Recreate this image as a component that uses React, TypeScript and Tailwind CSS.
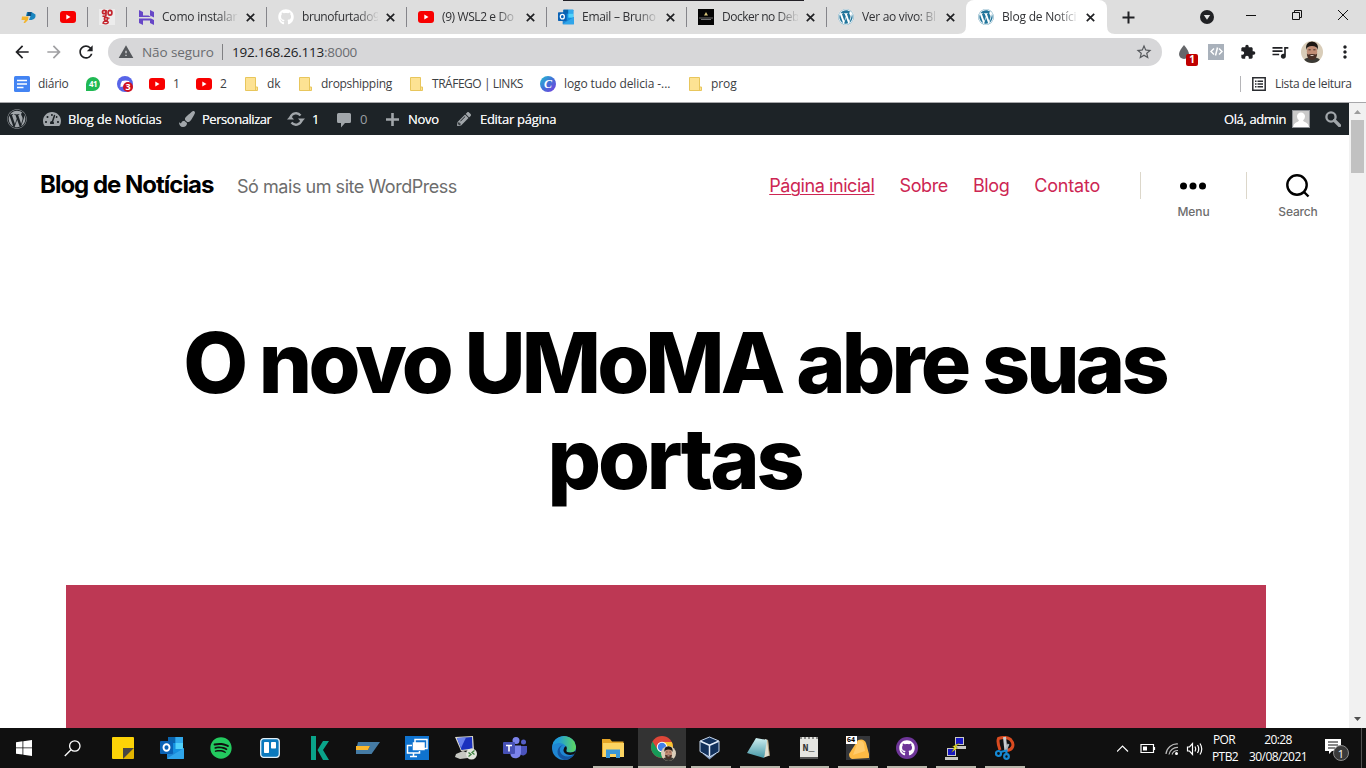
import type { ReactNode } from "react";
import { FaWordpress, FaGithub, FaSpotify, FaPaintBrush, FaPencilAlt, FaTachometerAlt } from "react-icons/fa";
import { MdWarning, MdArrowBack, MdArrowForward, MdRefresh, MdStarBorder, MdExtension, MdQueueMusic, MdMoreVert } from "react-icons/md";

const UI = "font-['Open_Sans','Noto_Sans',sans-serif]";

function YouTube() {
  return (
    <svg width="16" height="12" viewBox="0 0 16 12" className="block shrink-0">
      <rect width="16" height="12" rx="3" fill="#f80000" />
      <path d="M6.300 3.500v5L10.500 6z" fill="#fff" />
    </svg>
  );
}

function WpBlue() {
  return (
    <span className="block size-4 rounded-full bg-white">
      <FaWordpress className="block size-4 text-[#21759b]" />
    </span>
  );
}

function Outlook({ size }: { size: number }) {
  return (
    <svg width={size} height={size} viewBox="0 0 24 24" className="block shrink-0">
      <rect x="8" y="1" width="15" height="19" rx="1" fill="#1490df" />
      <rect x="8" y="1" width="7.500" height="6" fill="#0a64ad" />
      <rect x="15.500" y="1" width="7.500" height="6" fill="#32a9ec" />
      <rect x="15.500" y="7" width="7.500" height="6" fill="#51d2fb" />
      <path d="M7 12l8.500 5L24 12v10a1 1 0 0 1-1 1H8a1 1 0 0 1-1-1z" fill="#1d85d4" />
      <path d="M7 22.500L24 12v10a1 1 0 0 1-1 1H8z" fill="#2fa5ea" />
      <rect x="0" y="5" width="13" height="13" rx="1" fill="#0a62b5" />
      <ellipse cx="6.500" cy="11.500" rx="3" ry="3.300" fill="none" stroke="#fff" strokeWidth="1.900" />
    </svg>
  );
}

function Folder() {
  return (
    <svg width="13" height="14" viewBox="0 0 13 14" className="block shrink-0">
      <path d="M.5.5h10v9.500h2v3.500H.5z" fill="#fde293" stroke="#e8c65c" />
      <path d="M10.500 9v4.500" stroke="#e8c65c" />
    </svg>
  );
}

function Face({ size }: { size: number }) {
  return (
    <svg width={size} height={size} viewBox="0 0 22 22" className="block shrink-0">
      <defs>
        <clipPath id={"face" + size}>
          <circle cx="11" cy="11" r="11" />
        </clipPath>
      </defs>
      <g clipPath={"url(#face" + size + ")"}>
        <rect width="22" height="22" fill="#d9cdb9" />
        <path d="M1 22q2-6 10-6t10 6z" fill="#3b3a35" />
        <ellipse cx="11" cy="10.500" rx="5.200" ry="7.500" fill="#c08c74" />
        <path d="M5 9q-1-8 6-8.500 7 .5 6 8.500-1-4-6-4t-6 4z" fill="#1d1713" />
        <path d="M5.800 12.500q1.200 1.500 2.500.8 2.700-.8 5.400 0 1.300.5 2.500-.8-.2 6-5.200 6.500-5-.5-5.200-6.500z" fill="#4a3026" />
        <path d="M8.800 14.200q2.200-.4 4.400 0-2.200 1.600-4.400 0z" fill="#f3e6df" />
        <path d="M7.500 8.800h2.200M12.300 8.800h2.200" stroke="#2a1a14" strokeWidth=".8" />
      </g>
    </svg>
  );
}

const Close = () => (
  <svg width="9" height="9" viewBox="0 0 9 9" className="block shrink-0">
    <path d="M.8.8l7.400 7.400M8.200.8L.8 8.200" stroke="#202124" strokeWidth="1.700" />
  </svg>
);

function Tab({ icon, title, active, track }: { icon: ReactNode; title: string; active?: boolean; track: string }) {
  return (
    <div className={"relative flex h-[34px] shrink-0 items-center " + (active ? "w-[141px] rounded-t-lg bg-white pl-3" : "w-[140px] pl-3")}>
      {active && (
        <svg width="157" height="8" viewBox="0 0 157 8" className="absolute bottom-0 left-[-8px]">
          <path d="M0 8q8 0 8-8v8zM157 8q-8 0-8-8v8z" fill="#fff" />
        </svg>
      )}
      <span className="flex w-4 justify-center">{icon}</span>
      <span className={"ml-2 w-[76px] text-[12px] leading-[18px] whitespace-nowrap text-[#303134] [mask-image:linear-gradient(to_right,black_72%,rgba(0,0,0,0.1)_98%)] " + track}>{title}</span>
      <span className="ml-2">
        <Close />
      </span>
    </div>
  );
}

const Sep = () => <div className="h-5 w-px shrink-0 bg-[#85858a]" />;

function TabStrip() {
  return (
    <div className="relative flex h-[34px] items-center bg-[#dedede]">
      <div className="flex w-[47px] justify-center pl-[9px]">
        <svg width="15" height="13" viewBox="0 0 15 13">
          <path d="M6 1h4.500l4 2.500q.5 4.500-4 5.500H8L9.500 5H5z" fill="#1a86c0" />
          <path d="M7 1h3.500l-.5 4H6z" fill="#0d4f80" />
          <path d="M1 5.500h6.500L7 9l-3 3H2.500L4 9H.5z" fill="#f3b52d" />
        </svg>
      </div>
      <Sep />
      <div className="flex w-[39px] justify-center">
        <YouTube />
      </div>
      <Sep />
      <div className="flex w-[38px] justify-center">
        <svg width="16" height="16" viewBox="0 0 16 16" fill="none" stroke="#c4252d" strokeWidth="1.700">
          <rect width="16" height="16" fill="#ececec" stroke="none" />
          <circle cx="5.200" cy="3" r="1.700" />
          <path d="M7 1q-.2 3 0 5-.5 2-3.500 1" />
          <ellipse cx="11" cy="3.700" rx="1.900" ry="2.400" />
          <circle cx="7" cy="10" r="1.600" />
          <path d="M9 8.500q0 1 1.500.5M6 12q4 .3 3 2-2 1.700-5 .2 0-1.500 2-2.200" strokeWidth="1.400" />
        </svg>
      </div>
      <Sep />
      <div className="-mr-px -ml-px flex">
        <Tab
          track="tracking-[-0.2px]"
          title="Como instalar"
          icon={
            <svg width="15" height="15" viewBox="0 0 15 15">
              <path d="M0 0l4 2v3.500h5.500L12 7H0zM11 0l4 2v5.500l-4-2zM0 8.500h12L15 10v5l-4-2v-2.500H4V15l-4-2z" fill="#6747c7" />
            </svg>
          }
        />
        <span className="w-px" />
      </div>
      <Sep />
      <div className="-mr-px -ml-px flex">
        <Tab track="tracking-[-0.42px]" title="brunofurtado9" icon={<FaGithub className="size-4 text-white" />} />
        <span className="w-px" />
      </div>
      <Sep />
      <div className="-mr-px -ml-px flex">
        <Tab track="tracking-[-0.4px]" title="(9) WSL2 e Do" icon={<YouTube />} />
        <span className="w-px" />
      </div>
      <Sep />
      <div className="-mr-px -ml-px flex">
        <Tab track="tracking-[-0.28px]" title="Email – Bruno" icon={<Outlook size={16} />} />
        <span className="w-px" />
      </div>
      <Sep />
      <div className="-mr-px -ml-px flex">
        <Tab
          track="tracking-[-0.5px]"
          title="Docker no Deb"
          icon={
            <svg width="16" height="16" viewBox="0 0 16 16">
              <rect width="16" height="16" fill="#050505" />
              <path d="M8 3l2 3.500H6z" fill="#d9c57a" />
              <path d="M1 9h14M3 10.500h10" stroke="#8c8c8c" strokeWidth=".8" />
            </svg>
          }
        />
        <span className="w-px" />
      </div>
      <Sep />
      <div className="-mr-px -ml-px flex">
        <Tab track="tracking-[-0.3px]" title="Ver ao vivo: Bl" icon={<WpBlue />} />
        <span className="w-px" />
      </div>
      <Tab active track="tracking-[-0.2px]" title="Blog de Notíci" icon={<WpBlue />} />
      <svg width="13" height="13" viewBox="0 0 13 13" className="ml-[15px] shrink-0">
        <path d="M6.500.5v12M.5 6.500h12" stroke="#202124" strokeWidth="2" />
      </svg>
      <svg width="14" height="14" viewBox="0 0 14 14" className="ml-[65px] shrink-0">
        <circle cx="7" cy="7" r="7" fill="#202124" />
        <path d="M3.800 5h6.400L7 9.800z" fill="#e4e4e4" />
      </svg>
      <svg width="102" height="12" viewBox="0 0 102 12" className="mb-[5px] ml-[32px] shrink-0" fill="none" stroke="#111" strokeWidth="1">
        <path d="M0 6.500h10M46.500 3.500h7v7h-7zM48.500 3.500v-2h7v7h-2M92 1l10 10M102 1L92 11" />
      </svg>
      <span className="absolute top-0 left-[563px] h-px w-[241px] bg-[#222026]" />
    </div>
  );
}

function Toolbar() {
  return (
    <div className="flex h-[35px] items-center bg-white pl-[12px] text-[#202124]">
      <MdArrowBack className="size-5 shrink-0" />
      <MdArrowForward className="ml-3 size-5 shrink-0 text-[#a0a0a3]" />
      <MdRefresh className="ml-[12px] size-5 shrink-0" />
      <div className="ml-[12px] flex h-7 w-[1054px] shrink-0 items-center rounded-full bg-[#d7d7d9] pr-[9px] pl-[10px]">
        <MdWarning className="size-4 shrink-0 text-[#55585c]" />
        <span className="ml-2 w-[80px] pt-px text-[13.500px] tracking-[-0.08px] whitespace-nowrap text-[#6a6c70]">Não seguro</span>
        <span className="h-4 w-px bg-[#808083]" />
        <span className="ml-[9px] pt-px text-[13.500px] tracking-[-0.26px] whitespace-nowrap text-[#202124]">
          192.168.26.113<span className="text-[#6a6c70]">:8000</span>
        </span>
        <MdStarBorder className="ml-auto size-[18px] text-[#55585c]" />
      </div>
      <div className="relative ml-[16px] size-5 shrink-0">
        <svg width="12" height="14" viewBox="0 0 12 14" className="mt-[3px]">
          <path d="M6 0q5 6 5 9a5 5 0 0 1-10 0q0-3 5-9z" fill="#65676a" />
        </svg>
        <span className="absolute top-[12px] left-[8px] flex size-3 items-center justify-center rounded-[2px] bg-[#c00000] text-[10px] font-bold text-white">1</span>
      </div>
      <div className="ml-[10px] flex size-4 shrink-0 items-center justify-center bg-[#a9b1bb]">
        <svg width="13" height="9" viewBox="0 0 13 9" fill="none" stroke="#fff" strokeWidth="1.500">
          <path d="M4 1.500L1 4.500l3 3M9 1.500l3 3-3 3M7.500.5l-2 8" />
        </svg>
      </div>
      <MdExtension className="ml-[16px] size-4 shrink-0" />
      <MdQueueMusic className="ml-[14px] size-5 shrink-0" />
      <span className="ml-[11px]">
        <Face size={22} />
      </span>
      <MdMoreVert className="ml-[12px] size-5 shrink-0" />
    </div>
  );
}

function Mark({ icon, text, w, track }: { icon: ReactNode; text?: string; w: string; track?: string }) {
  return (
    <div className={"flex shrink-0 items-center " + w}>
      <span className="flex w-4 shrink-0 justify-center">{icon}</span>
      {text && <span className={"ml-2 whitespace-nowrap " + (track ?? "")}>{text}</span>}
    </div>
  );
}

function Bookmarks() {
  return (
    <div className="flex h-[34px] items-center border-b border-[#a7a7aa] bg-white pb-[3px] pl-[14px] text-[12px] text-[#3c4043]">
      <Mark
        w="w-[71px]"
        text="diário"
        track="tracking-[-0.3px]"
        icon={
          <svg width="16" height="16" viewBox="0 0 16 16">
            <rect width="16" height="16" rx="1.500" fill="#4384f3" />
            <path d="M3 4.500h10M3 8h10M3 11.500h6.500" stroke="#fff" strokeWidth="1.600" />
          </svg>
        }
      />
      <Mark
        w="w-[32px]"
        icon={
          <span className="flex size-[14px] items-center justify-center rounded-full rounded-bl-[4px] bg-[#20b954] text-[8px] font-bold tracking-[-0.5px] text-white">41</span>
        }
      />
      <Mark
        w="w-[32px]"
        icon={
          <span className="relative flex size-4 items-center justify-center rounded-full bg-[#5865e8]">
            <svg width="11" height="8" viewBox="0 0 11 8">
              <path d="M2 1q3.500-1 7 0 2 3 1.500 6L8 6.500H3L.5 7Q0 4 2 1z" fill="#fff" />
            </svg>
            <span className="absolute top-[6px] left-[6px] flex size-[10px] items-center justify-center rounded-full bg-[#cf1020] text-[9px] font-bold text-white">3</span>
          </span>
        }
      />
      <Mark w="w-[47px]" icon={<YouTube />} text="1" />
      <Mark w="w-[47px]" icon={<YouTube />} text="2" />
      <Mark w="w-[54px]" icon={<Folder />} text="dk" />
      <Mark w="w-[111px]" icon={<Folder />} text="dropshipping" track="tracking-[-0.3px]" />
      <Mark w="w-[132px]" icon={<Folder />} text="TRÁFEGO | LINKS" track="tracking-[-0.47px]" />
      <Mark
        w="w-[147px]"
        text="logo tudo delicia -..."
        track="tracking-[-0.1px]"
        icon={
          <span className="flex size-4 items-center justify-center rounded-full bg-linear-to-br from-[#12bfd0] via-[#416fd7] to-[#7134df] font-['Liberation_Serif',serif] text-[12px] leading-none font-bold text-white italic">C</span>
        }
      />
      <Mark w="w-[60px]" icon={<Folder />} text="prog" track="tracking-[-0.1px]" />
      <span className="ml-auto h-4 w-px bg-[#b5b5b8]" />
      <svg width="14" height="14" viewBox="0 0 14 14" className="ml-[11px] shrink-0" fill="none" stroke="#2a2c30" strokeWidth="1.500">
        <path d="M.8.8h12.400v12.400H.8zM3 4.200h1.500M5.500 4.200H11M3 7h1.500M5.500 7H11M3 9.800h1.500M5.500 9.800H11" />
      </svg>
      <span className="ml-[9px] w-[91px] tracking-[-0.35px] whitespace-nowrap">Lista de leitura</span>
    </div>
  );
}

function AdminBar() {
  return (
    <div className="flex h-8 shrink-0 items-center bg-[#1d2327] pl-[7px] text-[13px] leading-[18px] whitespace-nowrap text-[#f0f0f1] [text-shadow:0_0_0.3px_#f0f0f1]">
      <FaWordpress className="size-5 shrink-0 text-[#a1a6aa]" />
      <FaTachometerAlt className="ml-4 size-[18px] shrink-0 text-[#a1a6aa]" />
      <span className="ml-[7px] w-[111px] tracking-[-0.22px]">Blog de Notícias</span>
      <FaPaintBrush className="size-4 shrink-0 text-[#a1a6aa]" />
      <span className="ml-[7px] w-[85px] tracking-[-0.45px]">Personalizar</span>
      <svg width="18" height="16" viewBox="0 0 18 16" className="shrink-0" fill="none" stroke="#a1a6aa" strokeWidth="2.300">
        <path d="M3.500 6.500A5.700 5.700 0 0 1 13.500 4.500M14.500 9.500A5.700 5.700 0 0 1 4.500 11.500" />
        <path d="M11 7.500h7L14.500 11.500zM0 8.500h7L3.500 4.500z" fill="#a1a6aa" stroke="none" />
      </svg>
      <span className="ml-[7px] w-[25px]">1</span>
      <svg width="14" height="16" viewBox="0 0 14 16" className="mt-px shrink-0">
        <path d="M1.500 1h11a1.500 1.500 0 0 1 1.500 1.500v7a1.500 1.500 0 0 1-1.500 1.500H8l-4 4.500V11H1.500A1.500 1.500 0 0 1 0 9.500v-7A1.500 1.500 0 0 1 1.500 1z" fill="#a1a6aa" />
      </svg>
      <span className="ml-[9px] w-[26px] text-[#9a9fa3] [text-shadow:none]">0</span>
      <svg width="13" height="13" viewBox="0 0 13 13" className="shrink-0">
        <path d="M6.500 0v13M0 6.500h13" stroke="#a1a6aa" strokeWidth="2.600" />
      </svg>
      <span className="ml-[9px] w-[49px] tracking-[-0.3px]">Novo</span>
      <FaPencilAlt className="size-[14px] shrink-0 text-[#a1a6aa]" />
      <span className="ml-[9px] tracking-[-0.28px]">Editar página</span>
      <span className="ml-auto tracking-[-0.38px]">Olá, admin</span>
      <svg width="18" height="18" viewBox="0 0 18 18" className="ml-[6px] shrink-0">
        <rect width="18" height="18" fill="#c9c9c9" />
        <path d="M9 2.500a4 4 0 0 1 4 4.200 5 5 0 0 1-2 3.600q.2 1.300 3 2.200 2.500 1 3 4.500H1q.5-3.500 3-4.500 2.800-.9 3-2.200a5 5 0 0 1-2-3.600 4 4 0 0 1 4-4.200z" fill="#fff" />
        <rect x=".5" y=".5" width="17" height="17" fill="none" stroke="#8c8f94" />
      </svg>
      <svg width="16" height="16" viewBox="0 0 16 16" className="mr-2 ml-[15px] shrink-0" fill="none" stroke="#a1a6aa">
        <circle cx="6" cy="6" r="4.600" strokeWidth="2.300" />
        <path d="M9.500 9.500l5 5" strokeWidth="3.200" strokeLinecap="round" />
      </svg>
    </div>
  );
}

function SiteHeader() {
  return (
    <header className="flex h-[128px] shrink-0 items-start pl-10 font-['Inter',sans-serif]">
      <div className="mt-[32px] w-[197px] text-[24px] leading-9 font-bold tracking-[-1px] whitespace-nowrap text-black">Blog de Notícias</div>
      <div className="mt-[34px] text-[18px] leading-9 tracking-[-0.46px] whitespace-nowrap text-[#6d6d6d]">Só mais um site WordPress</div>
      <nav className="mt-[39px] ml-auto flex gap-[25px] text-[18px] leading-6 text-[#cd2653]">
        <a className="tracking-[-0.43px] underline decoration-1 underline-offset-2">Página inicial</a>
        <a className="tracking-[-0.38px]">Sobre</a>
        <a className="tracking-[-0.38px]">Blog</a>
        <a className="tracking-[-0.22px]">Contato</a>
      </nav>
      <div className="mt-[37px] ml-10 h-[27px] w-px bg-[#dcd7ca]" />
      <div className="mt-[38px] flex w-[105px] flex-col items-center">
        <svg width="26" height="26" viewBox="0 0 26 26" fill="#000" className="mr-0.5">
          <circle cx="3.500" cy="13" r="3.500" />
          <circle cx="13" cy="13" r="3.500" />
          <circle cx="22.500" cy="13" r="3.500" />
        </svg>
        <span className="mt-[5px] text-[12px] leading-4 font-medium tracking-[-0.05px] text-[#6d6d6d]">Menu</span>
      </div>
      <div className="mt-[37px] h-[27px] w-px bg-[#dcd7ca]" />
      <div className="mt-[38px] flex w-[102px] flex-col items-center">
        <svg width="26" height="26" viewBox="0 0 26 26" fill="none" stroke="#000" strokeWidth="2.400" className="mr-0.5">
          <circle cx="13" cy="12" r="9.700" />
          <path d="M19.500 18.500l5 5" />
        </svg>
        <span className="mt-[5px] text-[12px] leading-4 font-medium tracking-[-0.15px] text-[#6d6d6d]">Search</span>
      </div>
    </header>
  );
}

function Page() {
  return (
    <div className="flex h-[625px] bg-white">
      <div className="flex w-[1349px] flex-col overflow-hidden">
        <AdminBar />
        <SiteHeader />
        <h1 className="mt-[52px] mb-[78px] shrink-0 text-center font-['Inter',sans-serif] text-[84px] leading-[96px] font-extrabold text-black">
          <span className="block tracking-[-3.8px]">O novo UMoMA abre suas</span>
          <span className="block tracking-[-3.1px]">portas</span>
        </h1>
        <div className="ml-[66px] h-[143px] w-[1200px] shrink-0 bg-[#bd3854]" />
      </div>
      <div className="flex w-[17px] flex-col items-center bg-[#f1f1f1]">
        <svg width="17" height="17" viewBox="0 0 17 17">
          <path d="M5 11h7L8.500 7z" fill="#9c9c9c" />
        </svg>
        <div className="h-[53px] w-[13px] bg-[#c1c1c1]" />
        <svg width="17" height="17" viewBox="0 0 17 17" className="mt-auto">
          <path d="M5 6h7l-3.500 4z" fill="#505050" />
        </svg>
      </div>
    </div>
  );
}

function TaskItem({ children, open, active }: { children: ReactNode; open?: boolean; active?: boolean }) {
  return (
    <div className="flex h-10 w-[49px] shrink-0 justify-center">
      <div className={"flex h-full flex-col items-center " + (active ? "w-12 bg-[#333]" : "w-10")}>
        <div className="flex h-[38px] items-center justify-center pt-[2px]">{children}</div>
        {open && <div className="h-0.5 w-full bg-[#b8b7ab]" />}
      </div>
    </div>
  );
}

function Taskbar() {
  return (
    <div className={"flex h-10 items-center bg-[#101010] text-white " + UI}>
      <div className="flex w-12 shrink-0 justify-center">
        <svg width="16" height="16" viewBox="0 0 16 16" fill="#fff">
          <path d="M0 2.200l6.500-.9v6.200H0zM7.300 1.200L16 0v7.500H7.300zM0 8.300h6.500v6.300L0 13.700zM7.300 8.300H16V16l-8.700-1.300z" />
        </svg>
      </div>
      <div className="flex w-[50px] shrink-0 justify-center pr-[2px]">
        <svg width="17" height="17" viewBox="0 0 17 17" fill="none" stroke="#fff" strokeWidth="1.300">
          <circle cx="10.800" cy="6" r="5.200" />
          <path d="M7 9.800L.8 16" />
        </svg>
      </div>
      <TaskItem>
        <svg width="22" height="22" viewBox="0 0 22 22">
          <path d="M1 0h20a1 1 0 0 1 1 1v10L11 22H1a1 1 0 0 1-1-1V1a1 1 0 0 1 1-1z" fill="#fcd307" />
          <path d="M11 11h11L11 22z" fill="#484644" />
          <path d="M22 11v10a1 1 0 0 1-1 1H11z" fill="#e3b400" />
        </svg>
      </TaskItem>
      <TaskItem>
        <Outlook size={24} />
      </TaskItem>
      <TaskItem>
        <FaSpotify className="size-[22px] text-[#23ca5f]" />
      </TaskItem>
      <TaskItem>
        <svg width="20" height="20" viewBox="0 0 20 20">
          <rect x=".7" y=".7" width="18.600" height="18.600" rx="3" fill="#0b79bd" stroke="#e2eff7" strokeWidth="1.300" />
          <rect x="4" y="4" width="5" height="11" rx=".7" fill="#fff" />
          <rect x="11" y="4" width="5" height="6.500" rx=".7" fill="#fff" />
        </svg>
      </TaskItem>
      <TaskItem>
        <svg width="18" height="24" viewBox="0 0 18 24" fill="#0aa48a" className="ml-[2px]">
          <path d="M0 0h5v24H0zM12 5h6l-6 9 6 10h-6L6.500 14z" />
        </svg>
      </TaskItem>
      <TaskItem>
        <svg width="24" height="14" viewBox="0 0 24 14">
          <path d="M2 1h22l-8.500 12H0V9h12l2-4H1z" fill="#457ba4" />
          <path d="M0 5h14l-2 4H0z" fill="#fbb72c" />
        </svg>
      </TaskItem>
      <TaskItem>
        <svg width="24" height="24" viewBox="0 0 24 24" fill="none" stroke="#fff" strokeWidth="1.500">
          <rect width="24" height="24" fill="#0f73cf" stroke="none" />
          <path d="M10 7V3.500h12v9h-3" />
          <rect x="8.500" y="7" width="10.500" height="6.500" fill="#fff" />
          <path d="M7 9.500H2.500v7.500h12V15M8.500 17v3M5 20.500h7" />
        </svg>
      </TaskItem>
      <TaskItem>
        <svg width="24" height="24" viewBox="0 0 24 24">
          <path d="M1 1l18-1 1 14-13 1z" fill="#d9d9d0" />
          <path d="M3 2l15-1 .5 11.500L7.500 14z" fill="#1b31be" />
          <path d="M3 2l9-.6L7 12z" fill="#6b82ec" />
          <path d="M2 18l7-3 5 2v5l-8 1-5-2z" fill="#c7c8c2" />
          <circle cx="17.500" cy="18" r="5.500" fill="#e1e5dc" />
          <path d="M14.500 16.500l2.500 2-2.500 2M20.500 14.500l-2.500 2 2.500 2" fill="none" stroke="#3e8240" strokeWidth="1.300" />
        </svg>
      </TaskItem>
      <TaskItem>
        <svg width="24" height="22" viewBox="0 0 24 22">
          <circle cx="20.500" cy="5" r="2.500" fill="#555fc7" />
          <path d="M16 9h8v6a4 4 0 0 1-7 2z" fill="#4b53bc" />
          <circle cx="13" cy="3.500" r="3.500" fill="#7b83eb" />
          <path d="M8 8.500h10V16a5.500 5.500 0 0 1-10.500 2z" fill="#7b83eb" />
          <rect y="5" width="12" height="12" rx="1" fill="#4650b5" />
          <path d="M3 8.500h6M6 8.500v6" stroke="#fff" strokeWidth="1.600" />
        </svg>
      </TaskItem>
      <TaskItem>
        <svg width="24" height="24" viewBox="0 0 24 24">
          <defs>
            <linearGradient id="edgeTop" x1="0" x2="1">
              <stop offset="0.250" stopColor="#1f9bd9" />
              <stop offset="1" stopColor="#5fd95d" />
            </linearGradient>
            <clipPath id="edgeDisc">
              <circle cx="12" cy="12" r="12" />
            </clipPath>
          </defs>
          <g clipPath="url(#edgeDisc)">
            <rect width="24" height="24" fill="#1f86d2" />
            <path d="M0 10Q2 0 12 0q12 0 12 11 0 5-5.500 5.500-5 0-4-2.500 1-2-.5-4Q11 6.500 6.500 7 1.500 8 0 10z" fill="url(#edgeTop)" />
            <path d="M11 9Q7 11 8 15.500 10 20.500 16 20.500q4 0 7-3L20 24h-8Q5 21 5.500 15 6.500 10 11 9z" fill="#14549f" />
            <path d="M14.500 14q-1 2.500 4 2.500 3 0 5.500-2v3q-5 2.500-9.500.8-4.500-2.300-2.200-6.800l1.700-1.500q1.500 2 .5 4z" fill="#101010" />
          </g>
        </svg>
      </TaskItem>
      <TaskItem open>
        <svg width="22" height="20" viewBox="0 0 22 20">
          <path d="M0 1h8l2 2.500h11.500V19H0z" fill="#e5a526" />
          <path d="M1 5h21v14H1z" fill="#fcd462" />
          <path d="M4 20v-8.500h14V20h-4v-4H8v4z" fill="#3b98d7" />
        </svg>
      </TaskItem>
      <TaskItem open active>
        <div className="relative ml-[2px] size-6">
          <svg width="22" height="22" viewBox="0 0 22 22">
            <circle cx="11" cy="11" r="11" fill="#de4638" />
            <path d="M1.500 5.500A11 11 0 0 0 11 22l5-8.500H6.500z" fill="#169b58" />
            <path d="M11 6h9.800A11 11 0 0 1 11 22l4.800-8z" fill="#f8c531" />
            <circle cx="11" cy="11" r="5.200" fill="#fff" />
            <circle cx="11" cy="11" r="4.200" fill="#4280e8" />
          </svg>
          <span className="absolute top-[10px] left-[10px]">
            <Face size={15} />
          </span>
        </div>
      </TaskItem>
      <TaskItem open>
        <svg width="21" height="24" viewBox="0 0 21 24" strokeLinejoin="round" className="mr-[3px]">
          <path d="M4 18l6.500 5.500L17 18" fill="#8aa3ca" />
          <path d="M1 5l9.500-4L20 5v10.500l-9.500 5.500L1 15.500z" fill="#12315c" stroke="#c8d9ef" strokeWidth="1" />
          <path d="M1.500 5.300l9 4 9-4" fill="none" stroke="#e4eefb" strokeWidth="1.600" />
          <path d="M4.500 5.200l6-2.500 6 2.500-6 2.500z" fill="#12315c" />
          <path d="M10.500 9.500v11" stroke="#e4eefb" strokeWidth="1.500" />
        </svg>
      </TaskItem>
      <TaskItem open>
        <svg width="24" height="22" viewBox="0 0 24 22" className="mr-[2px]">
          <defs>
            <linearGradient id="padFace" x1="0" x2="0" y1="0" y2="1">
              <stop offset="0" stopColor="#cdeef0" />
              <stop offset="1" stopColor="#4597a6" />
            </linearGradient>
          </defs>
          <path d="M18 2l3 1 1.500 15.500-5.500 2z" fill="#e2dfd0" />
          <path d="M9 1l11 2-3 18L0 16z" fill="url(#padFace)" />
          <path d="M20.500 3l2 16" stroke="#a59167" strokeWidth=".8" />
        </svg>
      </TaskItem>
      <TaskItem open>
        <div className="flex h-[22px] w-[18px] items-center justify-center border-t-2 border-b-2 border-t-[#8c8c8a] border-b-[#555] bg-[#e5e5e1] font-['Liberation_Mono',monospace] text-[10px] font-bold text-[#343434] [border-top-style:dotted]">
          N_
        </div>
      </TaskItem>
      <TaskItem open>
        <div className="relative size-6 bg-[#34363a]">
          <svg width="24" height="24" viewBox="0 0 24 24">
            <path d="M12 4q6-2 8 3l3 11v4L6 23q-3-1-3-5z" fill="#fdba45" />
            <path d="M12 5q5-1 6 3l1 7-12 4z" fill="#ffcb6c" />
          </svg>
          <span className="absolute top-0 left-0 flex h-2 w-[11px] items-center justify-center bg-white text-[7px] font-bold text-black">64</span>
        </div>
      </TaskItem>
      <TaskItem open>
        <span className="flex size-[22px] items-center justify-center rounded-full bg-[#6e3598]">
          <FaGithub className="size-4 text-white" />
        </span>
      </TaskItem>
      <TaskItem open>
        <svg width="22" height="23" viewBox="0 0 22 23">
          <path d="M10 0h9v8h-9zM9 9h12v3H9zM2 11h9v8H2zM0 20h13v3H0z" fill="#c9c9c5" />
          <path d="M11 1h7v6h-7zM3 12h7v6H3z" fill="#1717c4" />
          <path d="M14.500 6l-4 4 2 1-6 4.500 3-5-2-1z" fill="#f8f222" stroke="#4e4b10" strokeWidth=".4" />
        </svg>
      </TaskItem>
      <TaskItem open>
        <svg width="20" height="24" viewBox="0 0 20 24">
          <path d="M5 14Q2 6 3.500 2.500q8-2.500 12 1 3.500 4 2 7.500-1.500 3-5.500 3.500" fill="none" stroke="#d94b20" strokeWidth="3" />
          <path d="M9.500 1l1.500 14" stroke="#c9cdd0" strokeWidth="3" />
          <path d="M13.500 8L10 16" stroke="#aeb4b9" strokeWidth="2" />
          <circle cx="3.500" cy="17.500" r="2.500" fill="none" stroke="#1689d4" strokeWidth="2.200" />
          <circle cx="11.500" cy="20.500" r="2.300" fill="none" stroke="#1689d4" strokeWidth="2.200" />
          <path d="M5.500 16l6-1.500v4" fill="none" stroke="#1689d4" strokeWidth="2" />
        </svg>
      </TaskItem>
      <svg width="88" height="18" viewBox="0 0 88 18" className="mt-[1px] ml-[88px] shrink-0" fill="none" stroke="#fff" strokeWidth="1.200">
        <path d="M0 11.500L5.500 6 11 11.500" />
        <path d="M24 4.500h12.500v8H24zM37.500 7v3" />
        <rect x="26" y="6.500" width="4" height="4" fill="#fff" stroke="none" />
        <path d="M49 14A11 11 0 0 1 61 4M52 14.500A8.500 8.500 0 0 1 61 7.500M55 14.500A6 6 0 0 1 61 10.500" stroke="#bbb" />
        <circle cx="59.500" cy="13.500" r="1.500" fill="#fff" stroke="none" />
        <path d="M70.500 7h2l3-3.500v11l-3-3.500h-2zM78 6.500q1.500 2.500 0 5M80.500 5q2.500 4 0 8M83 3.500q3.500 5.500 0 11" />
      </svg>
      <div className="ml-[7px] flex w-[36px] flex-col items-start text-[12px] leading-[17px] tracking-[-0.6px]">
        <span className="pl-px">POR</span>
        <span>PTB2</span>
      </div>
      <div className="flex w-[60px] shrink-0 flex-col items-center text-[12px] leading-[17px] tracking-[-0.58px] whitespace-nowrap">
        <span>20:28</span>
        <span>30/08/2021</span>
      </div>
      <div className="relative ml-[17px] h-5 w-6 shrink-0">
        <svg width="16" height="17" viewBox="0 0 16 17">
          <path d="M0 1h16v12h-9l-3 3v-3H0z" fill="#fff" />
          <path d="M3 4h10M3 7h10M3 10h7" stroke="#101010" />
        </svg>
        <span className="absolute top-[7px] left-[8px] flex size-4 items-center justify-center rounded-full border border-[#8c8c8c] bg-[#3a3a3a] text-[11px] leading-none text-white">1</span>
      </div>
      <span className="ml-auto h-10 w-px bg-[#505050]" />
      <span className="w-1" />
    </div>
  );
}

export default function App() {
  return (
    <div className={"flex h-[768px] w-[1366px] flex-col overflow-hidden " + UI}>
      <TabStrip />
      <Toolbar />
      <Bookmarks />
      <Page />
      <Taskbar />
    </div>
  );
}
